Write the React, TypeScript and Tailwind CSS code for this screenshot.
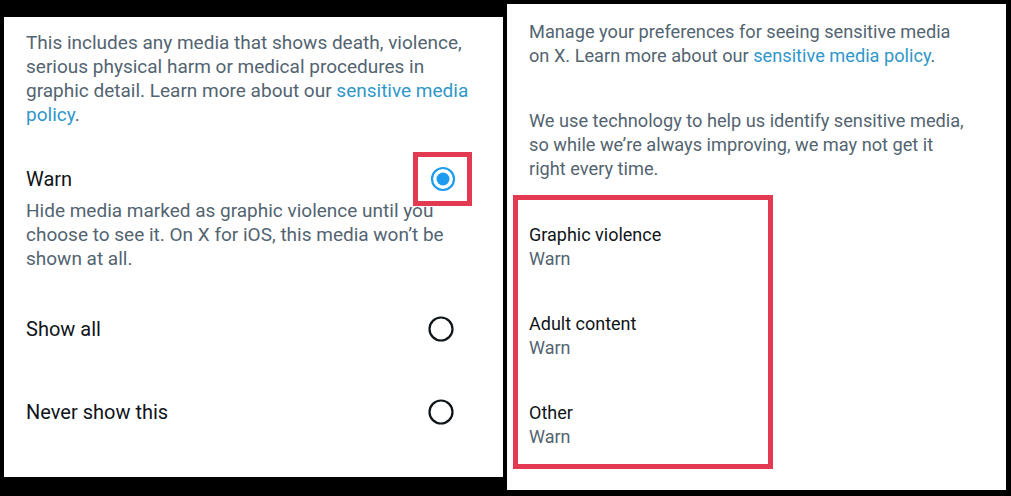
import React from "react";

const font = { fontFamily: "Roboto, 'Noto Sans', sans-serif" };

function Radio({ checked }: { checked?: boolean }) {
  if (checked) {
    return (
      <svg width="26" height="26" viewBox="0 0 26 26">
        <circle cx="13" cy="13" r="11" fill="none" stroke="#1d9bf0" strokeWidth="2.2" />
        <circle cx="13" cy="13" r="6.5" fill="#1d9bf0" />
      </svg>
    );
  }
  return (
    <svg width="26" height="26" viewBox="0 0 26 26">
      <circle cx="13" cy="13" r="11.5" fill="none" stroke="#0f1419" strokeWidth="2.2" />
    </svg>
  );
}

function OptionRow({ label, children }: { label: string; children?: React.ReactNode }) {
  return (
    <div className="flex items-center justify-between pr-[49px]">
      <span className="text-[20px] leading-[26px] text-[#0f1419]">{label}</span>
      {children}
    </div>
  );
}

function Setting({ title, value }: { title: string; value: string }) {
  return (
    <div className="flex flex-col text-[18px] leading-[24px]">
      <span className="text-[#0f1419]">{title}</span>
      <span className="text-[#536471]">{value}</span>
    </div>
  );
}

export default function App() {
  return (
    <div className="flex w-[1011px] h-[496px] bg-black overflow-hidden" style={font}>
      {/* Left screenshot */}
      <div className="ml-[4px] mt-[17px] w-[499px] h-[460px] bg-white pl-[22px] pt-[14px]">
        <p className="w-[446px] text-[19px] leading-[24px] text-[#536471]">
          This includes any media that shows death, violence, serious physical harm or medical procedures in
          graphic detail. Learn more about our <span className="text-[#2f97c9]">sensitive media policy</span>.
        </p>

        <div className="mt-[25px] flex items-center justify-between pr-[31px]">
          <span className="text-[20px] leading-[26px] text-[#0f1419]">Warn</span>
          <div className="w-[59px] h-[54px] border-[5px] border-[#e23a50] flex items-center justify-center">
            <Radio checked />
          </div>
        </div>
        <p className="-mt-[7px] w-[430px] text-[19px] leading-[24px] text-[#536471]">
          Hide media marked as graphic violence until you choose to see it. On X for iOS, this media won’t be
          shown at all.
        </p>

        <div className="mt-[45px] flex flex-col gap-[57px]">
          <OptionRow label="Show all">
            <Radio />
          </OptionRow>
          <OptionRow label="Never show this">
            <Radio />
          </OptionRow>
        </div>
      </div>

      {/* Right screenshot */}
      <div className="ml-[4px] mt-[4px] w-[499px] h-[486px] bg-white pt-[16px]">
        <div className="pl-[22px] pr-[40px] text-[18.2px] leading-[24px] text-[#536471]">
          <p>
            Manage your preferences for seeing sensitive media on X. Learn more about our{" "}
            <span className="text-[#2f97c9]">sensitive media policy</span>.
          </p>
          <p className="mt-[41px]">
            We use technology to help us identify sensitive media, so while we’re always improving, we may not get it
            right every time.
          </p>
        </div>

        <div className="ml-[6px] mt-[14px] w-[260px] h-[274px] border-[5px] border-[#e23a50] pl-[11px] pt-[23px] flex flex-col gap-[41px]">
          <Setting title="Graphic violence" value="Warn" />
          <Setting title="Adult content" value="Warn" />
          <Setting title="Other" value="Warn" />
        </div>
      </div>
    </div>
  );
}
